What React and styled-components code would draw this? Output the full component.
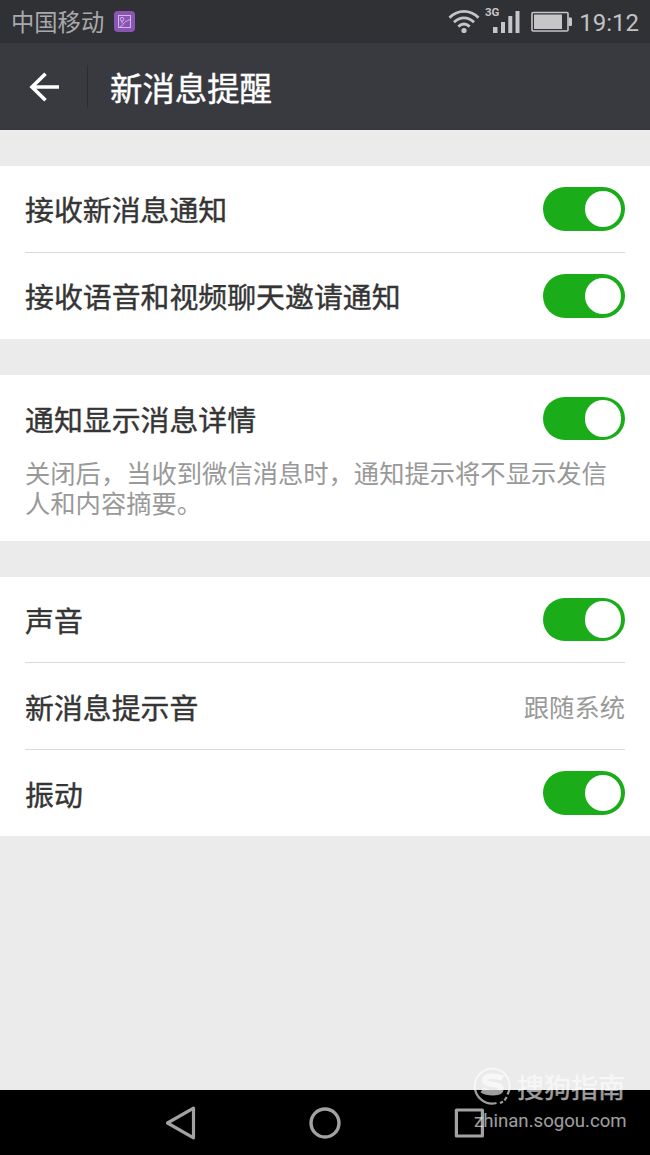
import React, { useState } from 'react';
import styled, { createGlobalStyle } from 'styled-components';

const GlobalStyle = createGlobalStyle`
  * {
    box-sizing: border-box;
  }

  body {
    margin: 0;
    background: #ebebeb;
    font-family: Roboto, 'Noto Sans CJK SC', sans-serif;
  }
`;

const Screen = styled.div`
  position: relative;
  display: flex;
  flex-direction: column;
  width: 650px;
  height: 1155px;
  overflow: hidden;
  background: #ebebeb;
`;

const StatusBar = styled.div`
  display: flex;
  align-items: center;
  justify-content: space-between;
  height: 43px;
  flex-shrink: 0;
  padding: 0 11px;
  background: #303135;
  color: #c6c6c8;
`;

const StatusGroup = styled.div`
  display: flex;
  align-items: center;
  height: 43px;
`;

const Carrier = styled.span`
  margin-right: 10px;
  padding-top: 4px;
  font-size: 23.3px;
  line-height: 39px;
  color: #a9a9ab;
`;

const StatusIcon = styled.svg`
  display: block;
  flex-shrink: 0;
  margin-right: ${props => props.$gap || 0}px;
`;

const Signal = styled.div`
  display: flex;
  align-items: flex-start;
  height: 29px;
  margin-right: 11px;
`;

const NetworkType = styled.span`
  width: 15px;
  margin-right: -7px;
  font-size: 11.5px;
  font-weight: 700;
  line-height: 11px;
`;

const Clock = styled.span`
  width: 60px;
  padding-top: 3px;
  font-size: 24px;
  line-height: 40px;
  text-align: right;
  white-space: nowrap;
  color: #c2c2c4;
`;

const Header = styled.header`
  display: flex;
  align-items: center;
  height: 87px;
  flex-shrink: 0;
  background: #393a3f;
`;

const BackButton = styled.button`
  display: flex;
  align-items: center;
  width: 87px;
  height: 87px;
  padding: 0 0 0 29px;
  border: 0;
  background: none;
  cursor: pointer;
`;

const HeaderDivider = styled.div`
  width: 1px;
  height: 43px;
  background: #2c2d31;
`;

const Title = styled.h1`
  margin: 0 0 0 22px;
  padding-top: 8px;
  font-size: 32.4px;
  font-weight: 400;
  line-height: 79px;
  color: #fff;
  -webkit-text-stroke: 0.4px currentColor;
`;

const Settings = styled.main`
  display: flex;
  flex: 1;
  flex-direction: column;
  gap: 36px;
  padding-top: 36px;
`;

const Section = styled.section`
  padding: 0 25px;
  background: #fff;
`;

const Row = styled.div`
  display: flex;
  align-items: center;
  justify-content: space-between;
  height: ${props => props.$height || 86.6}px;
  padding-top: ${props => props.$offset || 0}px;

  &:not(:last-child) {
    border-bottom: ${props => (props.$plain ? 0 : 1)}px solid #dadada;
  }
`;

const Label = styled.span`
  padding-top: 5px;
  font-size: 28.9px;
  line-height: 40px;
  color: #353535;
  -webkit-text-stroke: 0.4px currentColor;
`;

const Value = styled.span`
  padding-top: 5px;
  font-size: 25.3px;
  line-height: 36px;
  color: #999;
`;

const Description = styled.p`
  margin: 0;
  padding: 0 0 21px;
  font-size: 25.3px;
  line-height: 30px;
  color: #999;
`;

const Switch = styled.button`
  display: flex;
  align-items: center;
  justify-content: ${props => (props.$on ? 'flex-end' : 'flex-start')};
  width: 82px;
  height: 43.5px;
  padding: 0 3.7px;
  border: 0;
  border-radius: 22px;
  background: ${props => (props.$on ? '#1aad19' : '#d8d8d8')};
  cursor: pointer;
`;

const Knob = styled.span`
  width: 36.3px;
  height: 36.3px;
  border-radius: 50%;
  background: #fff;
`;

const NavBar = styled.nav`
  display: flex;
  align-items: center;
  justify-content: space-between;
  height: 65px;
  flex-shrink: 0;
  padding: 0 164px;
  background: #000;
`;

const Watermark = styled.div`
  position: absolute;
  right: 23px;
  bottom: 21px;
  width: 154px;
  color: #fff;
  opacity: 0.62;
`;

const Brand = styled.div`
  display: flex;
  align-items: center;
  gap: 5px;
  height: 42px;
  padding-bottom: 2px;
  font-size: 27px;
  white-space: nowrap;
  -webkit-text-stroke: 0.4px currentColor;
`;

const Site = styled.div`
  padding-left: 1px;
  font-size: 18.6px;
  line-height: 26px;
`;

const Toggle = () => {
  const [on, setOn] = useState(true);

  return (
    <Switch $on={on} role="switch" aria-checked={on} onClick={() => setOn(!on)}>
      <Knob />
    </Switch>
  );
};

const App = () => {
  return (
    <>
      <GlobalStyle />
      <Screen>
        <StatusBar>
          <StatusGroup>
            <Carrier>中国移动</Carrier>
            <StatusIcon width="21" height="21" viewBox="0 0 21 21" fill="none">
              <rect width="21" height="21" rx="4" fill="#8a55b4" />
              <g stroke="#d3b5e6" strokeWidth="1">
                <rect x="4.5" y="4.5" width="12" height="12" />
                <circle cx="8" cy="8.2" r="1.8" />
                <path d="M8 10v2.500M6 16c3-1 3.500-4.500 5.500-5.500 1.500-.7 2.500-.5 5-2.500" />
              </g>
            </StatusIcon>
          </StatusGroup>
          <StatusGroup>
            <StatusIcon $gap={5} width="32" height="25" viewBox="0 -0.5 32 25" fill="none">
              <g stroke="currentColor" strokeWidth="2.8">
                <path d="M1.5 8.2C10-.2 22-.2 30.5 8.2" />
                <path d="M6 12.8c6-5.8 14-5.8 20 0" />
                <path d="M10.3 17.1c3.6-3.2 7.8-3.2 11.4 0" />
              </g>
              <circle cx="16" cy="21" r="2.6" fill="currentColor" />
            </StatusIcon>
            <Signal>
              <NetworkType>3G</NetworkType>
              <StatusIcon width="27" height="27" viewBox="0 0 27 27" fill="currentColor">
                <rect x="0" y="20" width="4.5" height="6" />
                <rect x="8" y="15" width="4" height="11" />
                <rect x="15.3" y="9" width="4" height="17" />
                <rect x="22.5" y="4" width="4" height="22" />
              </StatusIcon>
            </Signal>
            <StatusIcon $gap={7} width="41" height="21" viewBox="0 -0.5 41 21" fill="none">
              <rect x="1" y="1" width="36" height="18.5" rx="1" stroke="currentColor" strokeWidth="1.6" />
              <rect x="3" y="3" width="28" height="14.5" fill="currentColor" />
              <path d="M37.5 6h2.5q1 0 1 1v6.500q0 1-1 1h-2.500z" fill="currentColor" />
            </StatusIcon>
            <Clock>19:12</Clock>
          </StatusGroup>
        </StatusBar>

        <Header>
          <BackButton aria-label="返回">
            <svg width="31" height="30" viewBox="0 0 31 30" fill="none" stroke="#fff" strokeWidth="3.6">
              <path d="M30 15H4M16.500 1.800L3 15l13.500 13.200" />
            </svg>
          </BackButton>
          <HeaderDivider />
          <Title>新消息提醒</Title>
        </Header>

        <Settings>
          <Section>
            <Row>
              <Label>接收新消息通知</Label>
              <Toggle />
            </Row>
            <Row>
              <Label>接收语音和视频聊天邀请通知</Label>
              <Toggle />
            </Row>
          </Section>

          <Section>
            <Row $plain $height={84.5} $offset={2}>
              <Label>通知显示消息详情</Label>
              <Toggle />
            </Row>
            <Description>关闭后，当收到微信消息时，通知提示将不显示发信人和内容摘要。</Description>
          </Section>

          <Section>
            <Row>
              <Label>声音</Label>
              <Toggle />
            </Row>
            <Row>
              <Label>新消息提示音</Label>
              <Value>跟随系统</Value>
            </Row>
            <Row>
              <Label>振动</Label>
              <Toggle />
            </Row>
          </Section>
        </Settings>

        <NavBar>
          <svg width="33" height="36" viewBox="0 0 33 36" fill="none" stroke="#a2a2a2" strokeWidth="3.2" strokeLinejoin="round">
            <path d="M29.500 3.200v29.600L3.500 18z" />
          </svg>
          <svg width="34" height="34" viewBox="0 0 34 34" fill="none" stroke="#a2a2a2" strokeWidth="3.4">
            <circle cx="17" cy="17" r="14" />
          </svg>
          <svg width="33" height="34" viewBox="0 0 33 34" fill="none" stroke="#a2a2a2" strokeWidth="3.2" strokeLinejoin="round">
            <rect x="3.400" y="4" width="26" height="26" />
          </svg>
        </NavBar>

        <Watermark>
          <Brand>
            <svg width="39" height="40" viewBox="0 0 39 40" fill="none" stroke="currentColor">
              <path d="M23.500 37A17.400 17.400 0 1 1 34.500 28.500M27 37l3-1.200M31.500 34.500l2.200-3.500" strokeWidth="2.2" />
              <path d="M29.500 12.500c-5-3-18-3.500-18 1.700 0 6 16.500 2.300 16.500 8.300 0 6-14 5-19 1.500" strokeWidth="5.500" />
            </svg>
            搜狗指南
          </Brand>
          <Site>zhinan.sogou.com</Site>
        </Watermark>
      </Screen>
    </>
  );
};

export default App;
